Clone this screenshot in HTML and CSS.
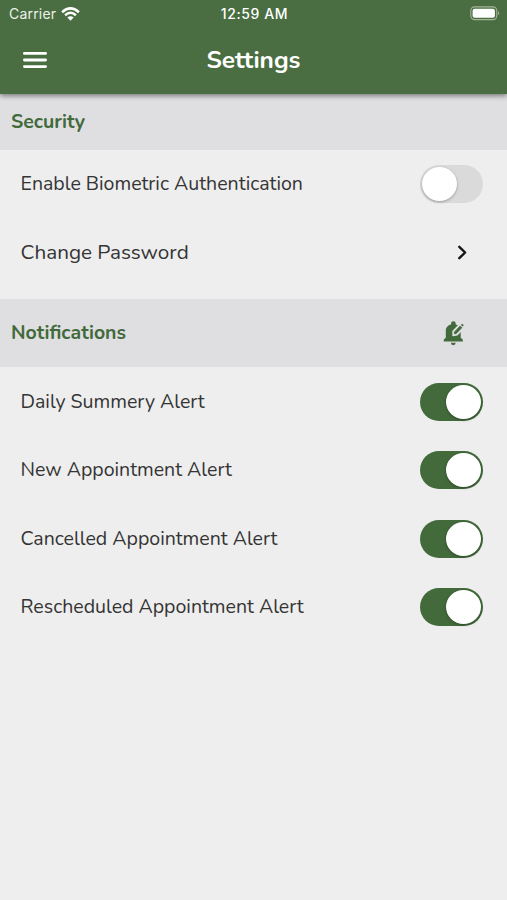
FILE: index.html
```html
<!DOCTYPE html>
<html lang="en">
<head>
<meta charset="utf-8">
<title>Settings</title>
<link rel="stylesheet" href="styles.css">
</head>
<body>
<header class="header">
  <div class="status">
    <div class="carrier"><span>Carrier</span>
      <svg width="19" height="14" viewBox="0 0 19 14" fill="none" stroke="#fff" stroke-width="2.5"><path d="M1.1 5.2Q9.5-2.4 17.9 5.2M4.1 8.2Q9.5 3.4 14.9 8.2"/><path d="M6.4 10.5Q9.5 7.9 12.6 10.5L9.5 13.7Z" fill="#fff" stroke="none"/></svg>
    </div>
    <span class="time">12:59 AM</span>
    <svg class="battery" width="31" height="15" viewBox="0 0 31 15"><rect x="1.8" y=".9" width="26" height="12.7" rx="3.8" fill="none" stroke="#a4b59a" stroke-width="1.1"/><rect x="3.6" y="2.7" width="22.3" height="9.1" rx="2" fill="#fff"/><path d="M29.1 5.1Q31.2 7.2 29.1 9.3Z" fill="#a4b59a"/></svg>
  </div>
  <div class="bar">
    <svg width="24" height="18" viewBox="0 0 24 18" stroke="#fff" stroke-width="2.8" stroke-linecap="round"><path d="M1.4 2.4h21.2M1.4 9h21.2M1.4 15.6h21.2"/></svg>
    <h1>Settings</h1>
  </div>
</header>
<main>
  <section>
    <div class="heading security"><h2>Security</h2></div>
    <div class="row"><span class="label">Enable Biometric Authentication</span><span class="toggle"></span></div>
    <div class="row last"><span class="label password">Change Password</span>
      <svg class="chevron" width="12" height="16" viewBox="0 0 12 16" fill="none" stroke="#161616" stroke-width="2.4" stroke-linecap="round" stroke-linejoin="round"><path d="M2.3 2.8L8.1 8.5l-5.8 5.7"/></svg>
    </div>
  </section>
  <section>
    <div class="heading notifications"><h2>Notifications</h2>
      <svg class="bell" width="22" height="26" viewBox="0 0 22 26"><path d="M.8 19.6v1.9h19v-1.9l-2.1-1.9v-6.9c0-3-2-5.5-5-6.2V3.5a2.3 2.3 0 0 0-4.6 0v1.1C4.9 5.3 2.8 7.8 2.8 10.8v6.9zM7.9 22.8a2.4 2.4 0 0 0 4.8 0z" fill="#426a3b"/><path d="M10.1 11.2L16.6 4.6 20.4 5.3 19.3 9.4 14.2 14.8 10.1 15.4Z" fill="#dfdfe2" stroke="#dfdfe2" stroke-width="1.6" stroke-linejoin="round"/><path d="M17.2 6.1l1.6 1.6-5.8 6h-1.6v-1.6zM19.2 4.1l1.2 1.2-.8.8-1.3-1.2z" fill="#426a3b" stroke="#426a3b" stroke-width=".8" stroke-linejoin="round"/></svg>
    </div>
    <div class="row"><span class="label">Daily Summery Alert</span><span class="toggle on"></span></div>
    <div class="row"><span class="label">New Appointment Alert</span><span class="toggle on"></span></div>
    <div class="row"><span class="label">Cancelled Appointment Alert</span><span class="toggle on"></span></div>
    <div class="row"><span class="label">Rescheduled Appointment Alert</span><span class="toggle on"></span></div>
  </section>
</main>
</body>
</html>
```
FILE: styles.css
```css
* { box-sizing: border-box; }
body { margin: 0; min-height: 900px; background: #eee; color: #343434; font-family: Nunito, Lato, sans-serif; }
h1, h2 { margin: 0; white-space: nowrap; }
svg { display: block; flex: none; }
.header { position: relative; height: 94px; background: #4a6e41; color: #fff; box-shadow: 0 2px 5px rgba(0,0,0,.45); }
.status { height: 27px; padding: 0 7px 0 9px; display: grid; grid-template-columns: 1fr auto 1fr; align-items: center; font-family: Inter, sans-serif; font-size: 14px; }
.carrier { display: flex; align-items: center; gap: 5px; color: #edf1eb; letter-spacing: .2px; }
.time { font-size: 14px; font-weight: 500; letter-spacing: .6px; }
.battery { justify-self: end; }
.bar { height: 66px; padding: 0 23px; display: grid; grid-template-columns: 24px 1fr 24px; align-items: center; }
.bar h1 { text-align: center; font-size: 24.4px; line-height: 30px; }
.heading { display: flex; align-items: center; justify-content: space-between; padding: 0 42.5px 0 11px; background: #dfdfe2; color: #426a3b; }
.security { height: 56px; }
.notifications { height: 68px; margin-bottom: .4px; }
.heading h2 { font-size: 19.5px; line-height: 24px; }
.row { height: 68.5px; padding: 0 24px 0 20.5px; display: flex; align-items: center; justify-content: space-between; }
.last { height: 80.5px; padding-bottom: 13px; }
.label { font-size: 19.55px; line-height: 26px; white-space: nowrap; }
.password { font-size: 20.7px; }
.toggle { width: 63px; height: 38px; padding: 2px; display: flex; flex: none; border-radius: 19px; background: #dadada; }
.toggle::after { content: ""; width: 35px; height: 34px; border-radius: 50%; background: #fff; box-shadow: 0 1px 3px rgba(0,0,0,.3); }
.on { justify-content: flex-end; background: #426a3b; }
.chevron { margin-right: 14px; }
```
